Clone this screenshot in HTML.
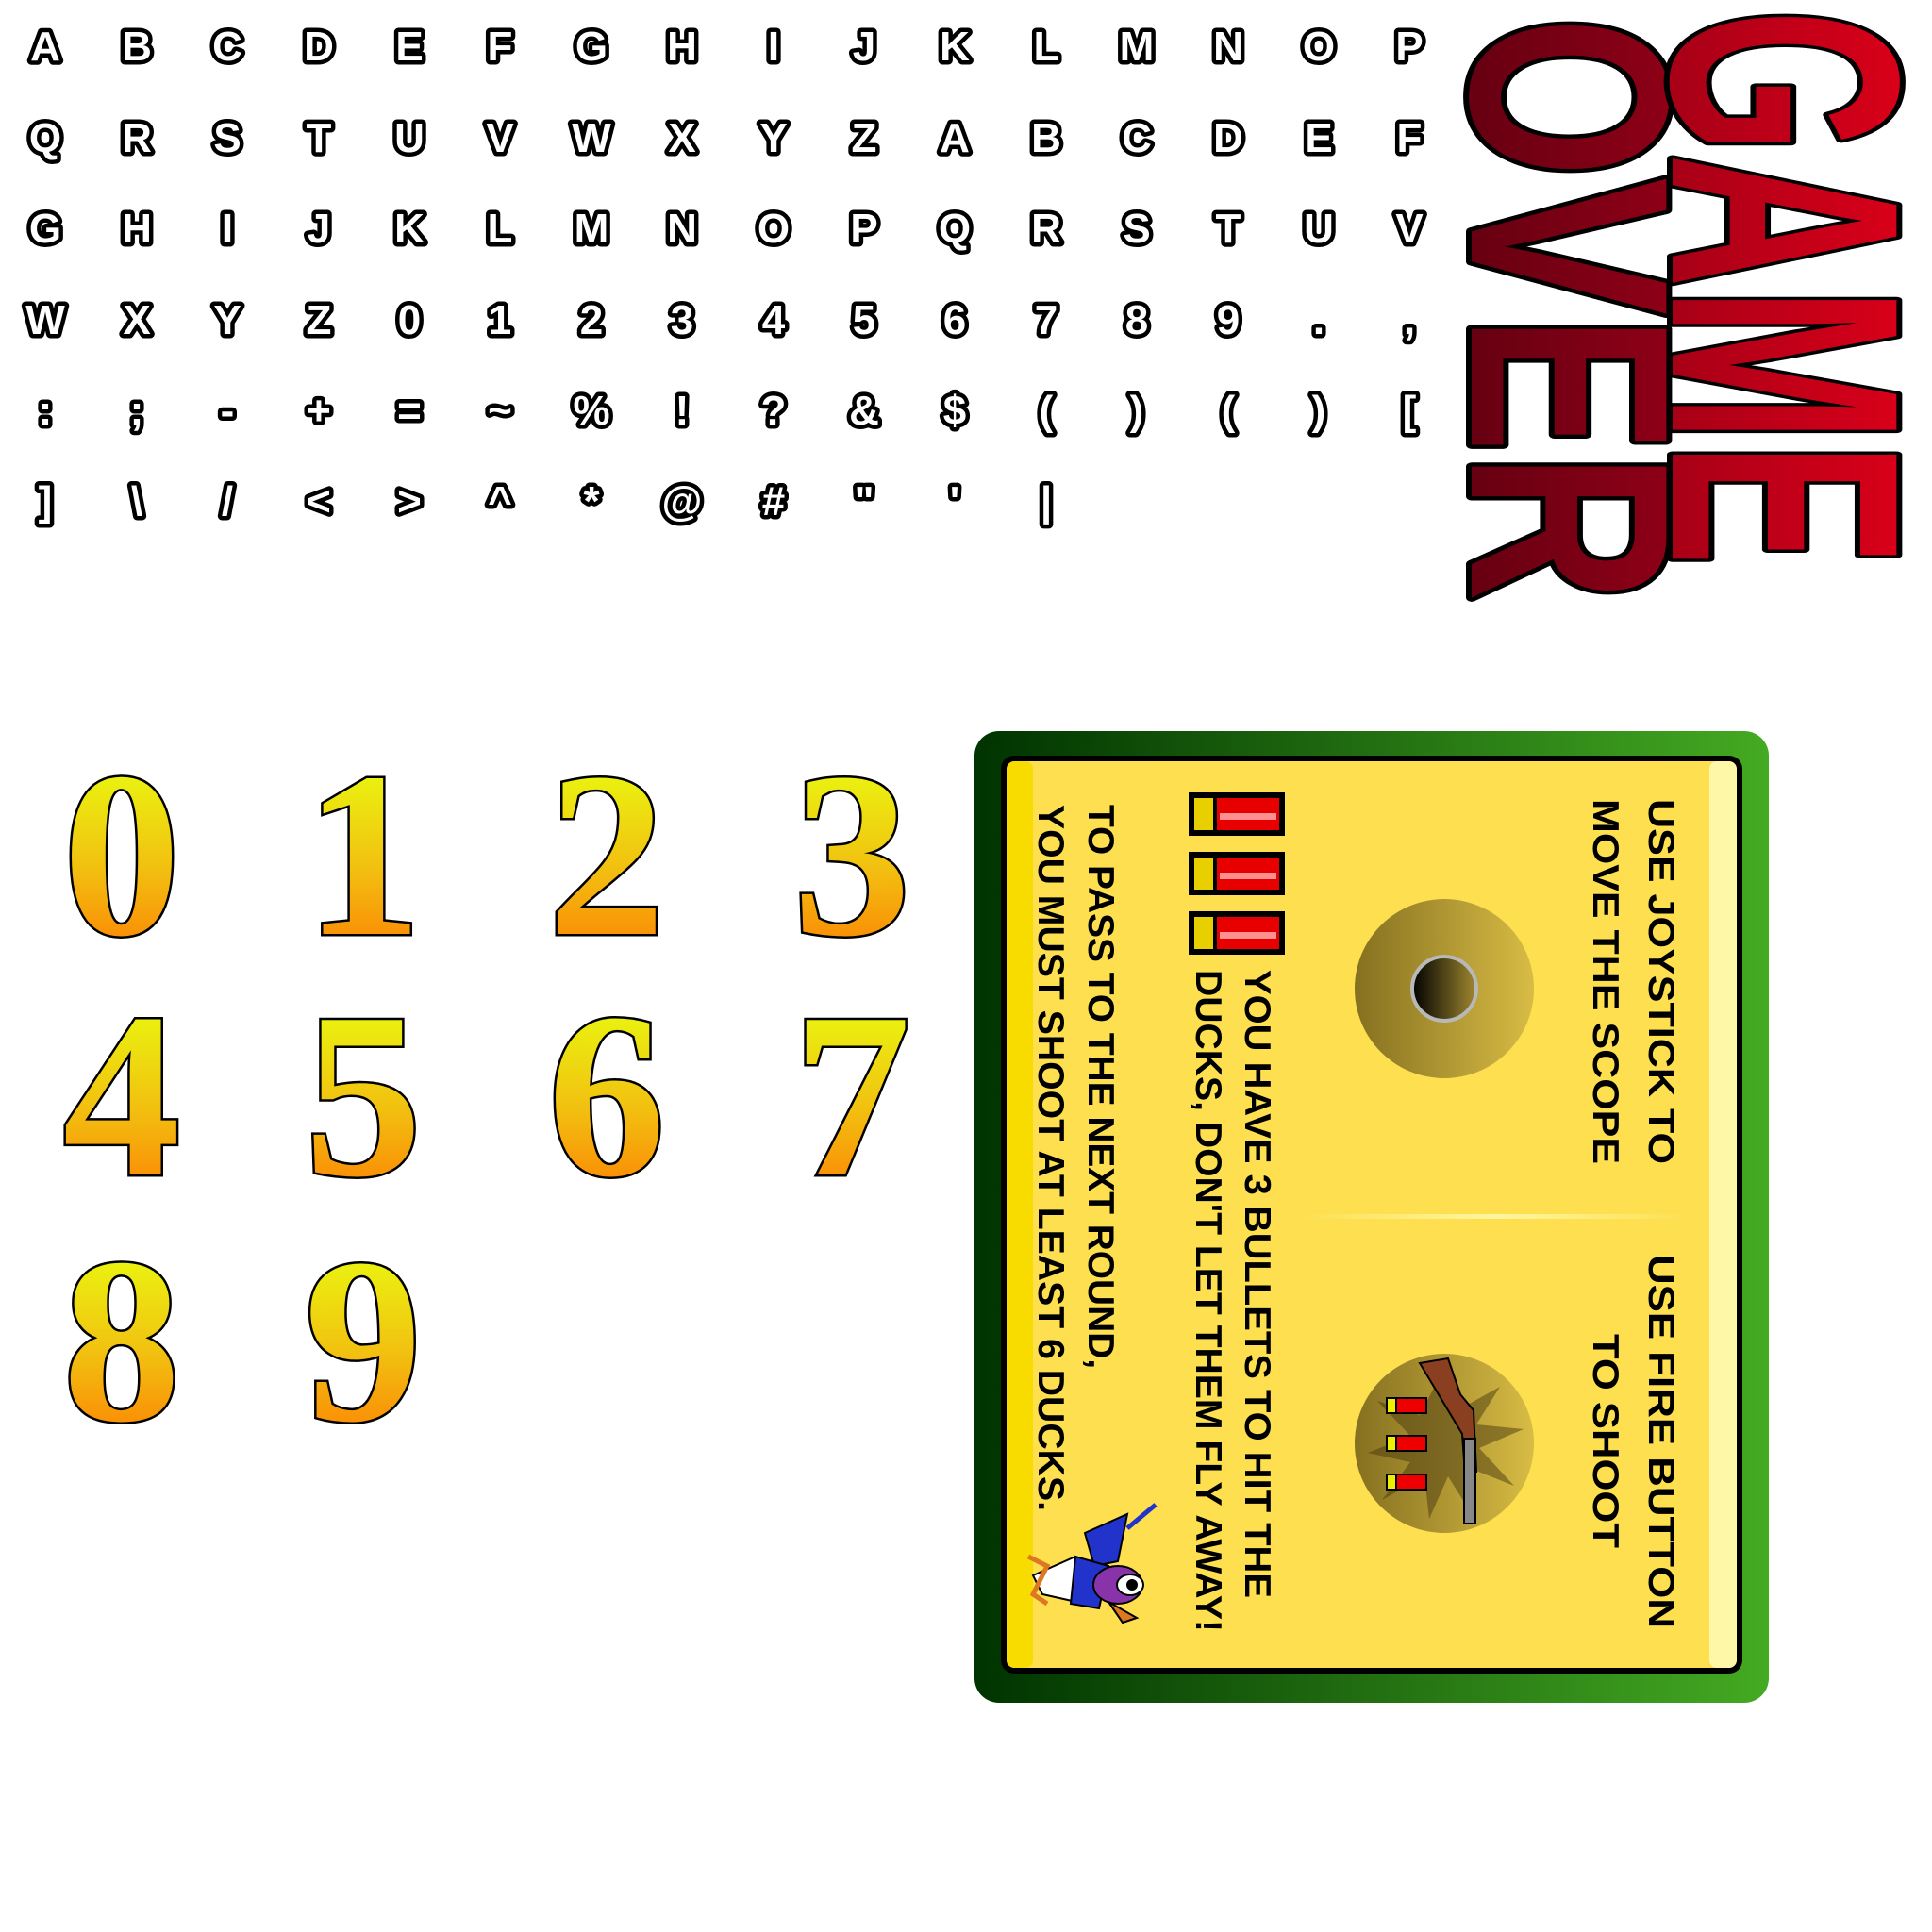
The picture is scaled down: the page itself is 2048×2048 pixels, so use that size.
<!DOCTYPE html>
<html><head><meta charset="utf-8"><style>
html,body{margin:0;padding:0;background:#fff;}
svg{display:block}
.l{font-family:"Liberation Sans",sans-serif;font-weight:bold;font-size:44px;fill:#fff;stroke:#000;stroke-width:9;paint-order:stroke;stroke-linejoin:round;text-anchor:middle}
.d{font-family:"Liberation Serif",serif;font-weight:bold;font-size:250px;stroke:#000;stroke-width:5;paint-order:stroke;text-anchor:middle}
.t{font-family:"Liberation Sans",sans-serif;font-weight:bold;font-size:39px;fill:#000}
.go{font-family:"Liberation Sans",sans-serif;font-weight:bold;stroke:#000;stroke-width:12;paint-order:stroke;stroke-linejoin:round}
</style></head><body>
<svg width="2048" height="2048" viewBox="0 0 2048 2048" xmlns="http://www.w3.org/2000/svg">
<defs>
<linearGradient id="dg" x1="0" y1="0" x2="0" y2="1"><stop offset="0.1" stop-color="#e8ff10"/><stop offset="0.55" stop-color="#f2c010"/><stop offset="1" stop-color="#ff7000"/></linearGradient>
<linearGradient id="ro" x1="0" y1="0" x2="0" y2="1"><stop offset="0" stop-color="#9a0018"/><stop offset="1" stop-color="#5a0010"/></linearGradient>
<linearGradient id="rg" x1="0" y1="0" x2="0" y2="1"><stop offset="0" stop-color="#e8001a"/><stop offset="1" stop-color="#980016"/></linearGradient>
<linearGradient id="pg" x1="0" y1="0" x2="1" y2="0"><stop offset="0" stop-color="#003300"/><stop offset="1" stop-color="#44aa22"/></linearGradient>
<linearGradient id="cg" x1="0" y1="0" x2="1" y2="0"><stop offset="0" stop-color="#857020"/><stop offset="1" stop-color="#d8bc45"/></linearGradient>
<linearGradient id="hg" x1="0" y1="0" x2="1" y2="0"><stop offset="0" stop-color="#000"/><stop offset="1" stop-color="#a08830"/></linearGradient>
<linearGradient id="ln" x1="0" y1="0" x2="1" y2="0"><stop offset="0" stop-color="#fff6a0" stop-opacity="0"/><stop offset="0.5" stop-color="#fff6a0"/><stop offset="1" stop-color="#fff6a0" stop-opacity="0"/></linearGradient>
</defs>
<g class="l">
<text y="64"><tspan x="48">A</tspan><tspan x="145">B</tspan><tspan x="241">C</tspan><tspan x="338">D</tspan><tspan x="434">E</tspan><tspan x="530">F</tspan><tspan x="627">G</tspan><tspan x="723">H</tspan><tspan x="820">I</tspan><tspan x="916">J</tspan><tspan x="1012">K</tspan><tspan x="1109">L</tspan><tspan x="1205">M</tspan><tspan x="1302">N</tspan><tspan x="1398">O</tspan><tspan x="1494">P</tspan></text>
<text y="161"><tspan x="48">Q</tspan><tspan x="145">R</tspan><tspan x="241">S</tspan><tspan x="338">T</tspan><tspan x="434">U</tspan><tspan x="530">V</tspan><tspan x="627">W</tspan><tspan x="723">X</tspan><tspan x="820">Y</tspan><tspan x="916">Z</tspan><tspan x="1012">A</tspan><tspan x="1109">B</tspan><tspan x="1205">C</tspan><tspan x="1302">D</tspan><tspan x="1398">E</tspan><tspan x="1494">F</tspan></text>
<text y="257"><tspan x="48">G</tspan><tspan x="145">H</tspan><tspan x="241">I</tspan><tspan x="338">J</tspan><tspan x="434">K</tspan><tspan x="530">L</tspan><tspan x="627">M</tspan><tspan x="723">N</tspan><tspan x="820">O</tspan><tspan x="916">P</tspan><tspan x="1012">Q</tspan><tspan x="1109">R</tspan><tspan x="1205">S</tspan><tspan x="1302">T</tspan><tspan x="1398">U</tspan><tspan x="1494">V</tspan></text>
<text y="354"><tspan x="48">W</tspan><tspan x="145">X</tspan><tspan x="241">Y</tspan><tspan x="338">Z</tspan><tspan x="434">0</tspan><tspan x="530">1</tspan><tspan x="627">2</tspan><tspan x="723">3</tspan><tspan x="820">4</tspan><tspan x="916">5</tspan><tspan x="1012">6</tspan><tspan x="1109">7</tspan><tspan x="1205">8</tspan><tspan x="1302">9</tspan><tspan x="1398">.</tspan><tspan x="1494">,</tspan></text>
<text y="450"><tspan x="48">:</tspan><tspan x="145">;</tspan><tspan x="241">-</tspan><tspan x="338">+</tspan><tspan x="434">=</tspan><tspan x="530">~</tspan><tspan x="627">%</tspan><tspan x="723">!</tspan><tspan x="820">?</tspan><tspan x="916">&amp;</tspan><tspan x="1012">$</tspan><tspan x="1109">(</tspan><tspan x="1205">)</tspan><tspan x="1302">(</tspan><tspan x="1398">)</tspan><tspan x="1494">[</tspan></text>
<text y="546"><tspan x="48">]</tspan><tspan x="145">\</tspan><tspan x="241">/</tspan><tspan x="338">&lt;</tspan><tspan x="434">&gt;</tspan><tspan x="530">^</tspan><tspan x="627">*</tspan><tspan x="723">@</tspan><tspan x="820">#</tspan><tspan x="916">"</tspan><tspan x="1012">'</tspan><tspan x="1109">|</tspan></text>
</g>
<text class="go" fill="url(#ro)" font-size="300" transform="translate(1560,18) rotate(90)" x="0" y="0" textLength="620" lengthAdjust="spacingAndGlyphs">OVER</text>
<text class="go" fill="url(#rg)" font-size="345" transform="translate(1773,10) rotate(90)" x="0" y="0" textLength="590" lengthAdjust="spacingAndGlyphs">GAME</text>
<g class="d" fill="url(#dg)">
<text x="129" y="990">0</text><text x="385" y="990">1</text><text x="643" y="990">2</text><text x="903" y="990">3</text>
<text x="129" y="1245">4</text><text x="385" y="1245">5</text><text x="643" y="1245">6</text><text x="903" y="1245">7</text>
<text x="129" y="1505">8</text><text x="385" y="1505">9</text>
</g>
<rect x="1033" y="775" width="842" height="1030" rx="26" fill="url(#pg)"/>
<rect x="1061" y="801" width="786" height="973" rx="14" fill="#000"/>
<rect x="1067" y="807" width="774" height="961" rx="10" fill="#fddf4f"/>
<rect x="1067" y="807" width="28" height="961" rx="8" fill="#f8dc00"/>
<rect x="1812" y="807" width="29" height="961" rx="8" fill="#fff7a8"/>
<rect x="1375" y="1287" width="420" height="5" fill="url(#ln)"/>
<circle cx="1531" cy="1048" r="95" fill="url(#cg)"/>
<circle cx="1531" cy="1048" r="34" fill="url(#hg)" stroke="#b8b8b8" stroke-width="4"/>
<circle cx="1531" cy="1530" r="95" fill="url(#cg)"/>
<polygon points="1531,1450 1545,1495 1590,1470 1565,1510 1615,1515 1568,1535 1605,1575 1555,1555 1560,1605 1535,1565 1515,1610 1510,1565 1465,1590 1495,1550 1450,1540 1495,1522 1460,1485 1505,1500" fill="#4a3a10" opacity="0.5"/>
<path d="M1505,1445 L1535,1440 L1548,1478 L1562,1495 L1565,1560 L1553,1562 L1550,1520 L1538,1500 Z" fill="#8a4020" stroke="#000" stroke-width="2"/>
<rect x="1552" y="1525" width="12" height="90" fill="#888" stroke="#000" stroke-width="2"/>
<g stroke="#000" stroke-width="2">
<rect x="1470" y="1482" width="42" height="16" fill="#e00"/><rect x="1470" y="1482" width="10" height="16" fill="#ee0"/>
<rect x="1470" y="1522" width="42" height="16" fill="#e00"/><rect x="1470" y="1522" width="10" height="16" fill="#ee0"/>
<rect x="1470" y="1563" width="42" height="16" fill="#e00"/><rect x="1470" y="1563" width="10" height="16" fill="#ee0"/>
</g>
<g>
<rect x="1260" y="840" width="102" height="46" fill="#000"/><rect x="1266" y="846" width="20" height="34" fill="#e8d000"/><rect x="1290" y="846" width="66" height="34" fill="#e80000"/><rect x="1293" y="862" width="60" height="7" fill="#ff9090"/>
<rect x="1260" y="903" width="102" height="46" fill="#000"/><rect x="1266" y="909" width="20" height="34" fill="#e8d000"/><rect x="1290" y="909" width="66" height="34" fill="#e80000"/><rect x="1293" y="925" width="60" height="7" fill="#ff9090"/>
<rect x="1260" y="966" width="102" height="46" fill="#000"/><rect x="1266" y="972" width="20" height="34" fill="#e8d000"/><rect x="1290" y="972" width="66" height="34" fill="#e80000"/><rect x="1293" y="988" width="60" height="7" fill="#ff9090"/>
</g>
<g stroke="#000" stroke-width="2">
<path d="M1150,1625 L1195,1605 L1185,1655 L1160,1660 Z" fill="#2233cc"/>
<path d="M1095,1670 L1140,1650 L1170,1675 L1150,1700 L1105,1690 Z" fill="#fff"/>
<path d="M1140,1650 L1175,1660 L1165,1705 L1135,1700 Z" fill="#2233cc"/>
<ellipse cx="1185" cy="1680" rx="26" ry="20" fill="#8833aa"/>
<ellipse cx="1198" cy="1680" rx="14" ry="11" fill="#fff"/>
<circle cx="1200" cy="1680" r="5" fill="#000"/>
<path d="M1175,1698 L1205,1715 L1190,1720 Z" fill="#dd7722"/>
<path d="M1090,1650 L1110,1660 L1095,1690 L1110,1700" fill="none" stroke="#dd7722" stroke-width="5"/>
<path d="M1195,1620 L1225,1595" stroke="#2233cc" stroke-width="5"/>
</g>
<g class="t">
<text transform="translate(1748,847) rotate(90)" textLength="387" lengthAdjust="spacingAndGlyphs">USE JOYSTICK TO</text>
<text transform="translate(1689,847) rotate(90)" textLength="387" lengthAdjust="spacingAndGlyphs">MOVE THE SCOPE</text>
<text transform="translate(1748,1330) rotate(90)" textLength="396" lengthAdjust="spacingAndGlyphs">USE FIRE BUTTON</text>
<text transform="translate(1689,1414) rotate(90)" textLength="227" lengthAdjust="spacingAndGlyphs">TO SHOOT</text>
<text transform="translate(1320,1028) rotate(90)" textLength="666" lengthAdjust="spacingAndGlyphs">YOU HAVE 3 BULLETS TO HIT THE</text>
<text transform="translate(1268,1028) rotate(90)" textLength="702" lengthAdjust="spacingAndGlyphs">DUCKS, DON'T LET THEM FLY AWAY!</text>
<text transform="translate(1154,853) rotate(90)" textLength="598" lengthAdjust="spacingAndGlyphs">TO PASS TO THE NEXT ROUND,</text>
<text transform="translate(1101,853) rotate(90)" textLength="749" lengthAdjust="spacingAndGlyphs">YOU MUST SHOOT AT LEAST 6 DUCKS.</text>
</g>
</svg>
</body></html>
